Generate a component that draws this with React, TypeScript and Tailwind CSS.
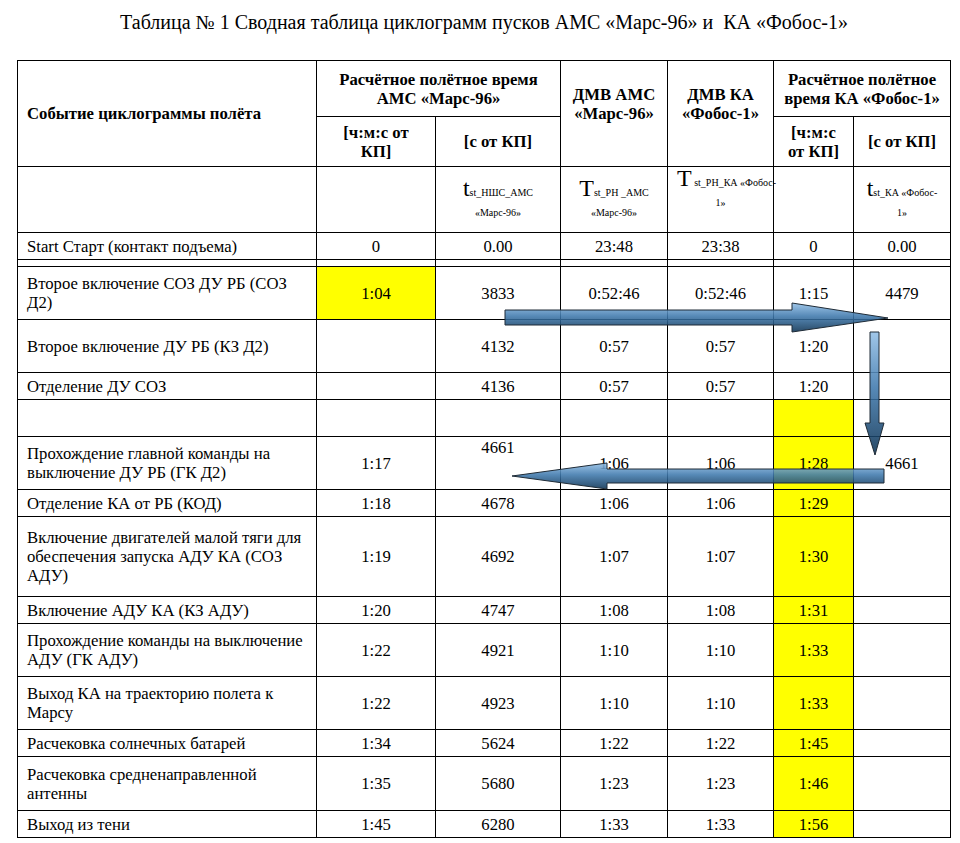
import React from "react";

type Row = {
  ev: string[];
  h: string;
  c: string[];
  markFirst?: boolean;
  topSecond?: boolean;
};

const rows: Row[] = [
  { ev: ["Второе включение СОЗ ДУ РБ (СОЗ", "Д2)"], h: "h-[53px]", c: ["1:04", "3833", "0:52:46", "0:52:46", "1:15", "4479"], markFirst: true },
  { ev: ["Второе включение ДУ РБ (КЗ Д2)"], h: "h-[53px]", c: ["", "4132", "0:57", "0:57", "1:20", ""] },
  { ev: ["Отделение ДУ СОЗ"], h: "h-[27px]", c: ["", "4136", "0:57", "0:57", "1:20", ""] },
  { ev: [], h: "h-[37px]", c: ["", "", "", "", "", ""] },
  { ev: ["Прохождение главной команды на", "выключение ДУ РБ (ГК Д2)"], h: "h-[53px]", c: ["1:17", "4661", "1:06", "1:06", "1:28", "4661"], topSecond: true },
  { ev: ["Отделение КА от РБ (КОД)"], h: "h-[27px]", c: ["1:18", "4678", "1:06", "1:06", "1:29", ""] },
  { ev: ["Включение двигателей малой тяги для", "обеспечения запуска АДУ КА (СОЗ", "АДУ)"], h: "h-[80px]", c: ["1:19", "4692", "1:07", "1:07", "1:30", ""] },
  { ev: ["Включение АДУ КА (КЗ АДУ)"], h: "h-[27px]", c: ["1:20", "4747", "1:08", "1:08", "1:31", ""] },
  { ev: ["Прохождение команды на выключение", "АДУ (ГК АДУ)"], h: "h-[53px]", c: ["1:22", "4921", "1:10", "1:10", "1:33", ""] },
  { ev: ["Выход КА на траекторию полета к", "Марсу"], h: "h-[53px]", c: ["1:22", "4923", "1:10", "1:10", "1:33", ""] },
  { ev: ["Расчековка солнечных батарей"], h: "h-[27px]", c: ["1:34", "5624", "1:22", "1:22", "1:45", ""] },
  { ev: ["Расчековка средненаправленной", "антенны"], h: "h-[54px]", c: ["1:35", "5680", "1:23", "1:23", "1:46", ""] },
  { ev: ["Выход из тени"], h: "h-[27px]", c: ["1:45", "6280", "1:33", "1:33", "1:56", ""] },
];

const cell = "border border-black px-[9px] py-0 align-middle";

function Lines({ items }: { items: string[] }) {
  return (
    <>
      {items.map((t, i) => (
        <div key={i} className="whitespace-nowrap">{t}</div>
      ))}
    </>
  );
}

// three semi-transparent block arrows drawn over the table
function Arrows() {
  return (
    <svg className="absolute left-0 top-0 pointer-events-none" width="960" height="843" viewBox="0 0 960 843">
      <defs>
        <linearGradient id="arrowFill" x1="0" y1="0" x2="0" y2="1">
          <stop offset="0" stopColor="#93bfe6" />
          <stop offset="0.45" stopColor="#3f79ad" />
          <stop offset="1" stopColor="#0b3152" />
        </linearGradient>
      </defs>
      <g fill="url(#arrowFill)" fillOpacity="0.88" stroke="#1f2b36" strokeWidth="1">
        <polygon points="505,310 792,310 792,303 888,318 792,332 792,325 505,325" />
        <polygon points="870,332 879,332 879,423 884,423 875,455 865,423 870,423" />
        <polygon points="884,469 607,469 607,463 512,476 607,489 607,483 884,483" />
      </g>
    </svg>
  );
}

export default function App() {
  return (
    <div className="relative w-[960px] h-[843px] bg-white text-black font-[Liberation_Serif,serif]">
      <div className="h-[44px] flex items-center justify-center pl-[8px] text-[20px]">
        Таблица № 1 Сводная таблица циклограмм пусков АМС «Марс-96» и{"\u00a0"} КА «Фобос-1»
      </div>

      <div className="pt-[16px] pl-[17px]">
        <table className="table-fixed border-collapse w-[933px] text-[16.7px] leading-[19px]">
          <colgroup>
            <col className="w-[299px]" />
            <col className="w-[119px]" />
            <col className="w-[125px]" />
            <col className="w-[107px]" />
            <col className="w-[106px]" />
            <col className="w-[80px]" />
            <col className="w-[97px]" />
          </colgroup>
          <thead className="font-bold">
            <tr className="h-[56px]">
              <th rowSpan={2} className={`${cell} text-left`}>Событие циклограммы полёта</th>
              <th colSpan={2} className={`${cell} text-center`}>
                <Lines items={["Расчётное полётное время", "АМС «Марс-96»"]} />
              </th>
              <th rowSpan={2} className={`${cell} text-center pb-[20px]`}>
                <Lines items={["ДМВ АМС", "«Марс-96»"]} />
              </th>
              <th rowSpan={2} className={`${cell} text-center pb-[20px]`}>
                <Lines items={["ДМВ КА", "«Фобос-1»"]} />
              </th>
              <th colSpan={2} className={`${cell} text-center`}>
                <Lines items={["Расчётное полётное", "время КА «Фобос-1»"]} />
              </th>
            </tr>
            <tr className="h-[50px]">
              <th className={`${cell} text-center`}>
                <Lines items={["[ч:м:с от", "КП]"]} />
              </th>
              <th className={`${cell} text-center`}>[с от КП]</th>
              <th className={`${cell} text-center`}>
                <Lines items={["[ч:м:с", "от КП]"]} />
              </th>
              <th className={`${cell} text-center`}>[с от КП]</th>
            </tr>
          </thead>
          <tbody>
            <tr className="h-[66px]">
              <td className={cell}></td>
              <td className={cell}></td>
              <td className={`${cell} text-center`}>
                <div className="leading-[22px] whitespace-nowrap">
                  <span className="text-[24px]">t</span>
                  <span className="text-[10px]">st_НШС_АМС</span>
                </div>
                <div className="text-[10px] leading-[18px]">«Марс-96»</div>
              </td>
              <td className={`${cell} text-center`}>
                <div className="leading-[22px] whitespace-nowrap">
                  <span className="text-[24px]">T</span>
                  <span className="text-[10px]">st_PH _АМС</span>
                </div>
                <div className="text-[10px] leading-[18px]">«Марс-96»</div>
              </td>
              <td className={`${cell} text-center align-top px-[2px]`}>
                <div className="leading-[22px] whitespace-nowrap">
                  <span className="text-[24px]">T</span>
                  <span className="text-[10px]"> st_PH_КА «Фобос-</span>
                </div>
                <div className="text-[10px] leading-[18px]">1»</div>
              </td>
              <td className={cell}></td>
              <td className={`${cell} text-center px-[4px]`}>
                <div className="leading-[22px] whitespace-nowrap">
                  <span className="text-[24px]">t</span>
                  <span className="text-[10px]">st_КА «Фобос-</span>
                </div>
                <div className="text-[10px] leading-[18px]">1»</div>
              </td>
            </tr>
            <tr className="h-[27px]">
              <td className={cell}>Start Старт (контакт подъема)</td>
              {["0", "0.00", "23:48", "23:38", "0", "0.00"].map((v, i) => (
                <td key={i} className={`${cell} text-center`}>{v}</td>
              ))}
            </tr>
            <tr className="h-[7px]">
              {[0, 1, 2, 3, 4, 5, 6].map((i) => (
                <td key={i} className="border border-black p-0"></td>
              ))}
            </tr>
            {rows.map((r, ri) => (
              <tr key={ri} className={r.h}>
                <td className={cell}>
                  <Lines items={r.ev} />
                </td>
                {r.c.map((v, i) => {
                  const yellow = (i === 0 && r.markFirst) || (i === 4 && ri >= 3);
                  const top = i === 1 && r.topSecond;
                  return (
                    <td
                      key={i}
                      className={`${cell} text-center ${yellow ? "bg-[#ffff00]" : ""} ${top ? "align-top pt-[1px]" : ""}`}
                    >
                      {v}
                    </td>
                  );
                })}
              </tr>
            ))}
          </tbody>
        </table>
      </div>

      <Arrows />
    </div>
  );
}
